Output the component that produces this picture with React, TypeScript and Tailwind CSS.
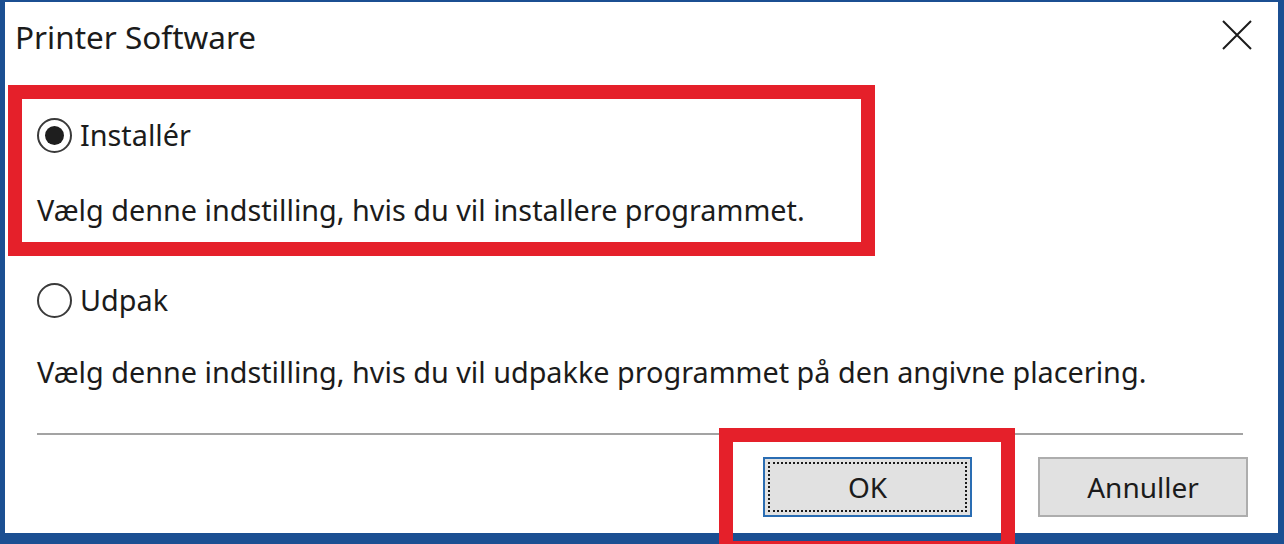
export default function App() {
  return (
    <main
      className="w-[1284px] h-[544px] bg-white text-[#1b1b1b] flex flex-col border-l-[5px] border-r-[6px] border-t-2 border-b-[11px] border-[#1b4f92]"
      style={{ fontFamily: '"Noto Sans", "Open Sans", sans-serif' }}
    >
      {/* TITLE BAR */}
      <header className="h-[83px] flex items-start justify-between pl-[10px] pr-[26px] pt-[15px]">
        <h1 className="text-[31.5px] leading-[40px]">Printer Software</h1>
        <svg
          viewBox="0 0 30 30"
          className="w-[30px] h-[30px] mt-[3px]"
          fill="none"
          stroke="#1b1b1b"
          strokeWidth="2"
        >
          <path d="M1 1 L29 29 M29 1 L1 29" />
        </svg>
      </header>

      {/* OPTION: INSTALL (annotated) */}
      <section className="ml-[3px] w-[867px] h-[171px] border-[14px] border-[#e5202a] pl-[15px] pt-[18px]">
        <label className="flex items-center gap-[8px] h-[36px]">
          <span className="w-[35px] h-[35px] rounded-full border-2 border-[#3a3a3a] flex items-center justify-center">
            <span className="w-[19px] h-[19px] rounded-full bg-[#1e1e1e]" />
          </span>
          <span className="text-[28.8px] leading-[36px]">Installér</span>
        </label>
        <p className="mt-[39px] text-[28.8px] leading-[36px]">
          Vælg denne indstilling, hvis du vil installere programmet.
        </p>
      </section>

      {/* OPTION: EXTRACT */}
      <section className="pl-[32px] pt-[26px]">
        <label className="flex items-center gap-[8px] h-[36px]">
          <span className="w-[35px] h-[35px] rounded-full border-2 border-[#3a3a3a]" />
          <span className="text-[28.8px] leading-[36px]">Udpak</span>
        </label>
        <p className="mt-[36px] text-[28.8px] leading-[36px]">
          Vælg denne indstilling, hvis du vil udpakke programmet på den angivne placering.
        </p>
      </section>

      {/* SEPARATOR */}
      <div className="mt-[43px] ml-[32px] mr-[35px] h-[2px] bg-[#a3a3a3]" />

      {/* BUTTONS */}
      <footer className="mt-[22px] flex justify-end gap-[66px] pr-[30px]">
        <div className="relative">
          <button className="w-[209px] h-[60px] bg-[#e1e1e1] border-2 border-[#2a6db3] p-[3px] text-[28px] leading-none">
            <span className="w-full h-full flex items-center justify-center border-2 border-dotted border-[#1b1b1b]">
              OK
            </span>
          </button>
          {/* annotation */}
          <span className="absolute -left-[44px] -right-[43px] -top-[29px] -bottom-[38px] border-[14px] border-[#e5202a] pointer-events-none" />
        </div>
        <button className="w-[210px] h-[60px] bg-[#e1e1e1] border-2 border-[#adadad] text-[28px] leading-none">
          Annuller
        </button>
      </footer>
    </main>
  );
}
